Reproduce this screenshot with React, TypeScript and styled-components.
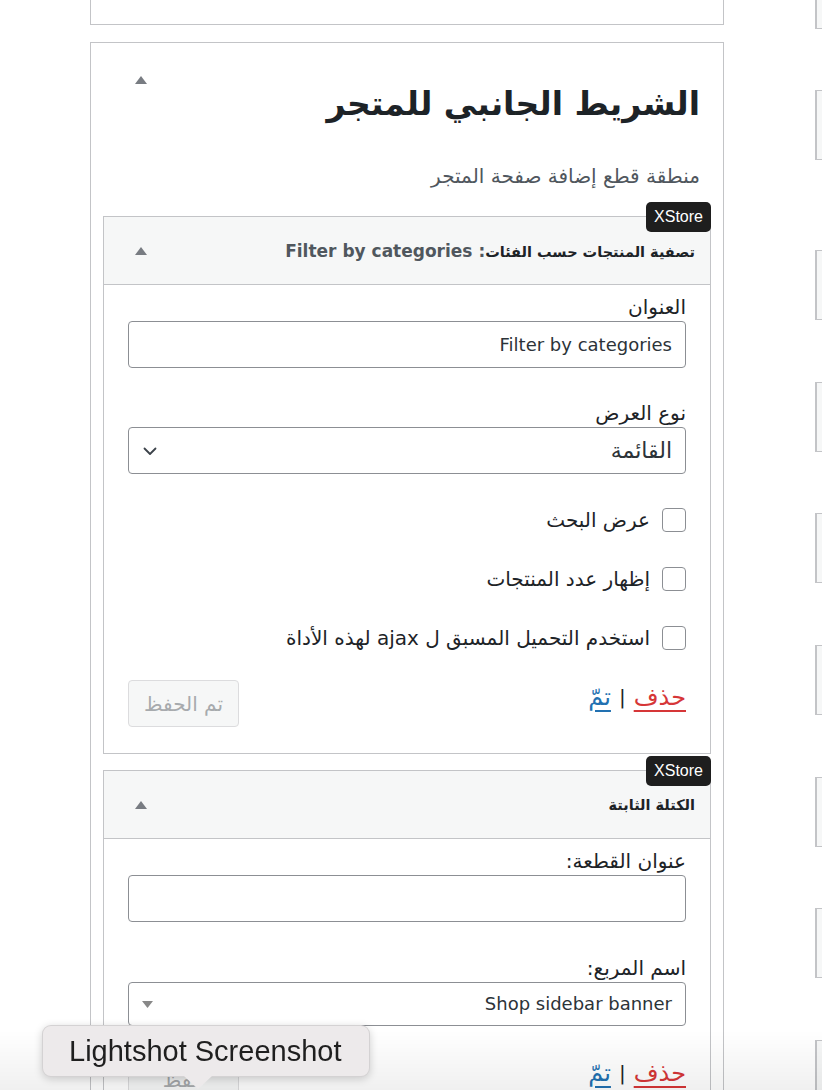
import React from "react";
import styled, { createGlobalStyle } from "styled-components";

const GlobalStyle = createGlobalStyle`
  html, body { margin: 0; padding: 0; background: #ffffff; }
  body {
    font-family: "DejaVu Sans", "Liberation Sans", sans-serif;
    color: #1d2327;
    overflow: hidden;
  }
  * { box-sizing: border-box; }
`;

const Page = styled.div`
  display: flex;
  align-items: flex-start;
  padding-left: 90px;
  gap: 91px;
  height: 1090px;
  overflow: hidden;
`;

const MainColumn = styled.div`
  width: 634px;
  flex-shrink: 0;
  direction: rtl;
  display: flex;
  flex-direction: column;
  gap: 17px;
`;

const TopBox = styled.div`
  height: 25px;
  border: 1px solid #c3c4c7;
  border-top: none;
  background: #fff;
`;

const SidebarBox = styled.section`
  border: 1px solid #c3c4c7;
  background: #fff;
  padding-bottom: 40px;
`;

const SidebarHeader = styled.div`
  display: flex;
  justify-content: space-between;
  align-items: flex-start;
  padding: 0 23px 0 44px;
`;

const SidebarTitle = styled.h2`
  margin: 39px 0 0;
  font-size: 33px;
  line-height: 44px;
  font-weight: 700;
  color: #1d2327;
`;

const Toggle = styled.span<{ $top: number }>`
  display: block;
  width: 0;
  height: 0;
  margin-top: ${(p) => p.$top}px;
  border-left: 6px solid transparent;
  border-right: 6px solid transparent;
  border-bottom: 8px solid #787c82;
`;

const SidebarDesc = styled.p`
  margin: 38px 23px 0 0;
  font-size: 20px;
  line-height: 24px;
  color: #50575e;
`;

const WidgetList = styled.div`
  margin-top: 28px;
  padding: 0 12px;
  display: flex;
  flex-direction: column;
  gap: 16px;
`;

const Widget = styled.div`
  position: relative;
  border: 1px solid #c3c4c7;
  background: #fff;
`;

const Badge = styled.span`
  position: absolute;
  top: -15px;
  right: -1px;
  height: 30px;
  padding: 0 8px;
  background: #1e1e1e;
  color: #fff;
  border-radius: 5px;
  font-family: "Liberation Sans", Arial, sans-serif;
  font-size: 16px;
  line-height: 30px;
  direction: ltr;
`;

const WidgetHeader = styled.div`
  height: 68px;
  display: flex;
  align-items: center;
  justify-content: space-between;
  padding: 0 15px 0 31px;
  background: #f6f7f7;
  border-bottom: 1px solid #c3c4c7;
`;

const WidgetTitle = styled.h3`
  margin: 0;
  font-size: 14.5px;
  font-weight: 700;
  color: #1d2327;
`;

const InTitle = styled.span`
  color: #50575e;
  font-size: 17px;
`;

const WidgetBody = styled.div`
  padding: 10px 24px 26px;
`;

const Field = styled.div<{ $gap?: number }>`
  margin-top: ${(p) => p.$gap ?? 0}px;
`;

const Label = styled.label`
  display: block;
  font-size: 20px;
  line-height: 24px;
  margin-bottom: 2px;
  color: #1d2327;
`;

const TextInput = styled.input`
  display: block;
  width: 100%;
  height: 47px;
  border: 1px solid #8c8f94;
  border-radius: 4px;
  padding: 0 13px;
  font-family: "DejaVu Sans", sans-serif;
  font-size: 18px;
  color: #2c3338;
  background: #fff;
  direction: rtl;
  outline: none;
`;

const SelectBox = styled.div<{ $h: number }>`
  display: flex;
  align-items: center;
  justify-content: space-between;
  height: ${(p) => p.$h}px;
  border: 1px solid #8c8f94;
  border-radius: 4px;
  padding: 0 13px 0 13px;
  color: #2c3338;
  background: #fff;
`;

const SelectText = styled.span<{ $size: number }>`
  font-size: ${(p) => p.$size}px;
  line-height: 26px;
`;

const CheckList = styled.div`
  margin-top: 34px;
  display: flex;
  flex-direction: column;
  gap: 35px;
`;

const CheckRow = styled.label`
  display: flex;
  align-items: center;
  gap: 12px;
  font-size: 20px;
  line-height: 24px;
  color: #1d2327;
`;

const CheckBox = styled.input`
  appearance: none;
  margin: 0;
  width: 24px;
  height: 24px;
  border: 1px solid #8c8f94;
  border-radius: 4px;
  background: #fff;
  flex-shrink: 0;
`;

const Actions = styled.div`
  margin-top: 30px;
  display: flex;
  justify-content: space-between;
  align-items: flex-start;
`;

const Links = styled.div`
  display: flex;
  align-items: center;
  gap: 8px;
  padding-top: 1px;
  font-size: 24px;
  line-height: 32px;
`;

const LinkText = styled.a<{ $color: string }>`
  color: ${(p) => p.$color};
  text-decoration: underline;
  text-underline-offset: 5px;
  cursor: pointer;
`;

const Sep = styled.span`
  color: #1d2327;
  font-size: 20px;
`;

const SaveButton = styled.button`
  height: 47px;
  padding: 0 14px;
  min-width: 111px;
  border: 1px solid #dcdcde;
  border-radius: 4px;
  background: #f6f7f7;
  color: #a7aaad;
  font-family: "DejaVu Sans", sans-serif;
  font-size: 20px;
  direction: rtl;
`;

const SideColumn = styled.div`
  flex: 1;
  display: flex;
  flex-direction: column;
`;

const SideBox = styled.div<{ $h: number; $gap: number; $noTop?: boolean }>`
  height: ${(p) => p.$h}px;
  margin-top: ${(p) => p.$gap}px;
  background: #f6f7f7;
  border: 1px solid #c3c4c7;
  border-left-width: 2px;
  border-right: none;
  ${(p) => (p.$noTop ? "border-top: none;" : "")}
`;

const Tooltip = styled.div`
  position: fixed;
  left: 42px;
  top: 1025px;
  width: 328px;
  height: 52px;
  border-radius: 9px;
  background: #edeaeb;
  border: 1px solid rgba(0, 0, 0, 0.1);
  box-shadow: 0 2px 8px rgba(0, 0, 0, 0.18);
  padding-left: 26px;
  font-family: "Liberation Sans", Arial, sans-serif;
  font-size: 29px;
  line-height: 50px;
  color: #1f1f1f;
  z-index: 5;
  &::after {
    content: "";
    position: absolute;
    left: 141px;
    top: 100%;
    border-left: 14px solid transparent;
    border-right: 14px solid transparent;
    border-top: 13px solid #edeaeb;
  }
`;

const BottomShade = styled.div`
  position: fixed;
  left: 0;
  right: 0;
  bottom: 0;
  height: 60px;
  pointer-events: none;
  background: linear-gradient(to bottom, rgba(0, 0, 0, 0), rgba(0, 0, 0, 0.06));
  z-index: 4;
`;

const Chevron = () => (
  <svg width="16" height="16" viewBox="0 0 16 16" fill="none">
    <path d="M2.5 5.5 L8 11 L13.5 5.5" stroke="#3c434a" strokeWidth="1.8" strokeLinecap="round" strokeLinejoin="round" />
  </svg>
);

const SmallArrow = () => (
  <svg width="11" height="7" viewBox="0 0 11 7">
    <path d="M0 0 H11 L5.5 7 Z" fill="#888888" />
  </svg>
);

const sideBoxes = [
  { h: 29, gap: 0, noTop: true },
  { h: 70, gap: 61 },
  { h: 70, gap: 90 },
  { h: 70, gap: 62 },
  { h: 70, gap: 61 },
  { h: 70, gap: 62 },
  { h: 70, gap: 62 },
  { h: 70, gap: 61 },
  { h: 70, gap: 62 },
];

export default function App() {
  return (
    <>
      <GlobalStyle />
      <Page>
        <MainColumn>
          <TopBox />
          <SidebarBox>
            <SidebarHeader>
              <SidebarTitle>الشريط الجانبي للمتجر</SidebarTitle>
              <Toggle $top={33} />
            </SidebarHeader>
            <SidebarDesc>منطقة قطع إضافة صفحة المتجر</SidebarDesc>
            <WidgetList>
              <Widget>
                <Badge>XStore</Badge>
                <WidgetHeader>
                  <WidgetTitle>
                    تصفية المنتجات حسب الفئات<InTitle>: Filter by categories</InTitle>
                  </WidgetTitle>
                  <Toggle $top={0} />
                </WidgetHeader>
                <WidgetBody>
                  <Field>
                    <Label>العنوان</Label>
                    <TextInput defaultValue="Filter by categories" />
                  </Field>
                  <Field $gap={33}>
                    <Label>نوع العرض</Label>
                    <SelectBox $h={47}>
                      <SelectText $size={22}>القائمة</SelectText>
                      <Chevron />
                    </SelectBox>
                  </Field>
                  <CheckList>
                    <CheckRow>
                      <CheckBox type="checkbox" />
                      عرض البحث
                    </CheckRow>
                    <CheckRow>
                      <CheckBox type="checkbox" />
                      إظهار عدد المنتجات
                    </CheckRow>
                    <CheckRow>
                      <CheckBox type="checkbox" />
                      استخدم التحميل المسبق ل ajax لهذه الأداة
                    </CheckRow>
                  </CheckList>
                  <Actions>
                    <Links>
                      <LinkText $color="#d63638">حذف</LinkText>
                      <Sep>|</Sep>
                      <LinkText $color="#2271b1">تمّ</LinkText>
                    </Links>
                    <SaveButton disabled>تم الحفظ</SaveButton>
                  </Actions>
                </WidgetBody>
              </Widget>
              <Widget>
                <Badge>XStore</Badge>
                <WidgetHeader>
                  <WidgetTitle>الكتلة الثابتة</WidgetTitle>
                  <Toggle $top={0} />
                </WidgetHeader>
                <WidgetBody>
                  <Field>
                    <Label>عنوان القطعة:</Label>
                    <TextInput defaultValue="" />
                  </Field>
                  <Field $gap={34}>
                    <Label>اسم المربع:</Label>
                    <SelectBox $h={44}>
                      <SelectText $size={18}>Shop sidebar banner</SelectText>
                      <SmallArrow />
                    </SelectBox>
                  </Field>
                  <Actions>
                    <Links>
                      <LinkText $color="#d63638">حذف</LinkText>
                      <Sep>|</Sep>
                      <LinkText $color="#2271b1">تمّ</LinkText>
                    </Links>
                    <SaveButton disabled>حفظ</SaveButton>
                  </Actions>
                </WidgetBody>
              </Widget>
            </WidgetList>
          </SidebarBox>
        </MainColumn>
        <SideColumn>
          {sideBoxes.map((b, i) => (
            <SideBox key={i} $h={b.h} $gap={b.gap} $noTop={b.noTop} />
          ))}
        </SideColumn>
      </Page>
      <Tooltip>Lightshot Screenshot</Tooltip>
      <BottomShade />
    </>
  );
}
